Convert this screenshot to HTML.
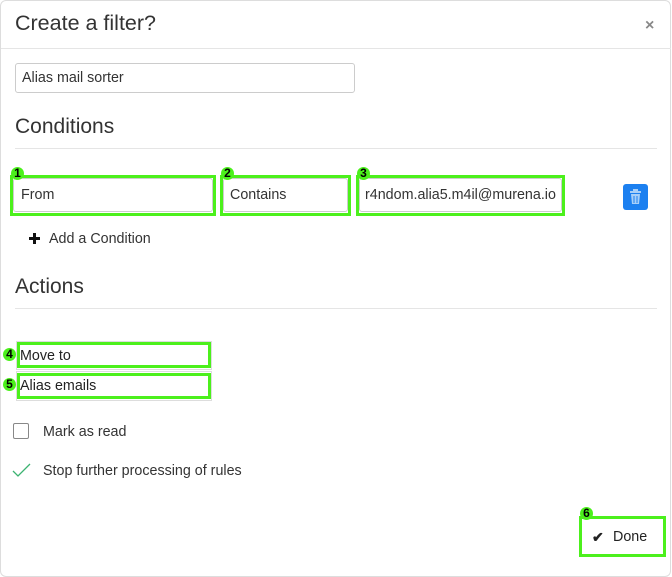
<!DOCTYPE html>
<html><head><style>
*{box-sizing:border-box;margin:0;padding:0}
body{width:672px;height:577px;background:#fff;font-family:"Liberation Sans",sans-serif;color:#333;position:relative;overflow:hidden}
.modal{position:absolute;left:0;top:0;width:671px;height:577px;border:1px solid #ddd;border-radius:6px}
.a{position:absolute}
.t{font-size:14.3px}
.hr{position:absolute;height:1px;background:#e5e5e5}
.inp{position:absolute;border:1px solid #ccc;border-radius:3px;font-size:14.3px;padding-left:6px;display:flex;align-items:center;color:#333;background:#fff}
.g{position:absolute;border:3px solid #4cf01c}
.b{position:absolute;width:13px;height:13px;border-radius:7px;background:#4cf01c;font-size:12px;font-weight:bold;color:#000;text-align:center;line-height:13px}
</style></head><body>
<div class="modal"></div>
<div class="a" style="left:15px;top:11px;font-size:21.5px;color:#333">Create a filter?</div>
<div class="a" style="left:645px;top:17px;font-size:16px;font-weight:bold;color:#888">×</div>
<div class="hr" style="left:1px;top:48px;width:670px"></div>
<div class="inp" style="left:15px;top:63px;width:340px;height:30px">Alias mail sorter</div>
<div class="a" style="left:15px;top:115px;font-size:21px">Conditions</div>
<div class="hr" style="left:15px;top:148px;width:642px"></div>

<div class="inp" style="left:13px;top:178px;width:200px;height:34px;padding-left:7px">From</div>
<div class="g" style="left:10px;top:175px;width:206px;height:41px"></div>
<div class="b" style="left:11px;top:167px">1</div>
<div class="inp" style="left:223px;top:178px;width:125px;height:34px">Contains</div>
<div class="g" style="left:220px;top:175px;width:131px;height:41px"></div>
<div class="b" style="left:221px;top:167px">2</div>
<div class="inp" style="left:359px;top:178px;width:203px;height:34px;padding-left:5px;overflow:hidden;white-space:nowrap">r4ndom.alia5.m4il@murena.io</div>
<div class="g" style="left:356px;top:175px;width:209px;height:41px"></div>
<div class="b" style="left:357px;top:167px">3</div>
<div class="a" style="left:623px;top:184px;width:25px;height:26px;background:#1c80f0;border-radius:3px">
<svg width="25" height="26" viewBox="0 0 25 26"><rect x="7" y="7" width="11" height="2" fill="#a8cff8"/><rect x="10" y="5" width="5" height="2" fill="#a8cff8"/><path d="M8 10h9l-1 10h-7z" fill="#a8cff8"/><path d="M11 12v7M14 12v7" stroke="#1c80f0" stroke-width="1"/></svg></div>
<svg class="a" style="left:28px;top:232px" width="13" height="13"><path d="M6.5 1v11M1 6.5h11" stroke="#111" stroke-width="3"/></svg>
<div class="a t" style="left:49px;top:231px">Add a Condition</div>

<div class="a" style="left:15px;top:275px;font-size:21px">Actions</div>
<div class="hr" style="left:15px;top:308px;width:642px"></div>
<div class="a" style="left:16px;top:341px;width:196px;height:29px;border:1px solid #ddd"></div>
<div class="g" style="left:17px;top:342px;width:194px;height:26px"></div>
<div class="b" style="left:3px;top:348px">4</div>
<div class="a t" style="left:20px;top:348px;color:#222">Move to</div>
<div class="a" style="left:16px;top:371px;width:196px;height:30px;border:1px solid #ddd"></div>
<div class="g" style="left:17px;top:373px;width:194px;height:26px"></div>
<div class="b" style="left:3px;top:378px">5</div>
<div class="a t" style="left:20px;top:378px;color:#222">Alias emails</div>

<div class="a" style="left:13px;top:423px;width:16px;height:16px;border:1px solid #888;border-radius:2px"></div>
<div class="a t" style="left:43px;top:424px">Mark as read</div>
<svg class="a" style="left:12px;top:462px" width="20" height="16"><path d="M1 9l5 5L18 2" fill="none" stroke="#3cb371" stroke-width="1.3"/></svg>
<div class="a t" style="left:43px;top:463px">Stop further processing of rules</div>

<div class="g" style="left:579px;top:516px;width:87px;height:41px"></div>
<div class="b" style="left:580px;top:507px">6</div>
<div class="a" style="left:592px;top:529px;font-size:14px;font-weight:bold;color:#222">✔</div>
<div class="a t" style="left:613px;top:529px;color:#222">Done</div>
</body></html>
